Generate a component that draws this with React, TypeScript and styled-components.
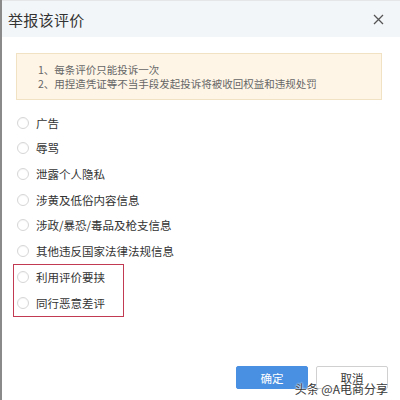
import React, { useState } from 'react';
import styled, { createGlobalStyle } from 'styled-components';

const GlobalStyle = createGlobalStyle`
  html, body {
    margin: 0;
    padding: 0;
    background: #fff;
  }
  body {
    font-family: "Noto Sans CJK SC", "Noto Sans", sans-serif;
  }
`;

const reasons = [
  '广告',
  '辱骂',
  '泄露个人隐私',
  '涉黄及低俗内容信息',
  '涉政/暴恐/毒品及枪支信息',
  '其他违反国家法律法规信息',
];

const flagged = ['利用评价要挟', '同行恶意差评'];

export default function App() {
  const [selected, setSelected] = useState<string | null>(null);

  const renderOption = (label: string) => (
    <Option key={label} onClick={() => setSelected(label)}>
      <Radio checked={selected === label} />
      <OptionLabel>{label}</OptionLabel>
    </Option>
  );

  return (
    <>
      <GlobalStyle />
      <Dialog>
        <Header>
          <Title>举报该评价</Title>
          <Close aria-label="close">
            <svg width="11" height="11" viewBox="0 0 11 11">
              <path d="M1 1 L10 10 M10 1 L1 10" stroke="#555" strokeWidth="1.3" />
            </svg>
          </Close>
        </Header>
        <Body>
          <Notice>
            <NoticeLine>1、每条评价只能投诉一次</NoticeLine>
            <NoticeLine>2、用捏造凭证等不当手段发起投诉将被收回权益和违规处罚</NoticeLine>
          </Notice>
          <OptionList>
            {reasons.map(renderOption)}
            <Highlight>{flagged.map(renderOption)}</Highlight>
          </OptionList>
        </Body>
        <Footer>
          <Button primary>确定</Button>
          <Button>取消</Button>
        </Footer>
        <Watermark>头条 @A电商分享</Watermark>
      </Dialog>
    </>
  );
}

const Dialog = styled.div`
  position: relative;
  box-sizing: border-box;
  width: 400px;
  height: 400px;
  display: flex;
  flex-direction: column;
  background: #fff;
  border-left: 2px solid #8a8a8a;
  overflow: hidden;
`;

const Header = styled.div`
  height: 37px;
  flex-shrink: 0;
  display: flex;
  align-items: center;
  justify-content: space-between;
  padding: 0 16px 0 6px;
  background: #f3f6f8;
  border-top: 1px solid #e4e6e8;
  box-sizing: border-box;
`;

const Title = styled.div`
  font-size: 15px;
  color: #333;
  letter-spacing: 0.3px;
`;

const Close = styled.div`
  display: flex;
  align-items: center;
  justify-content: center;
  width: 12px;
  height: 12px;
`;

const Body = styled.div`
  flex: 1;
  padding: 16px 18px 0 14px;
`;

const Notice = styled.div`
  box-sizing: border-box;
  height: 47px;
  padding: 9px 0 0 21px;
  background: #fef5e6;
  border: 1px solid #f1e2c4;
`;

const NoticeLine = styled.div`
  font-size: 10.5px;
  line-height: 14px;
  color: #666;
`;

const OptionList = styled.div`
  margin-top: 10px;
  display: flex;
  flex-direction: column;
`;

const Option = styled.label`
  height: 25.6px;
  display: flex;
  align-items: center;
  gap: 7px;
  padding-left: 1px;
  cursor: pointer;
`;

const Radio = styled.span<{ checked: boolean }>`
  box-sizing: border-box;
  width: 12px;
  height: 12px;
  border-radius: 50%;
  border: 1px solid #d6d6d6;
  background: ${(p) => (p.checked ? '#4a90e2' : '#fff')};
  box-shadow: inset 0 1px 1px rgba(0, 0, 0, 0.04);
`;

const OptionLabel = styled.span`
  font-size: 11.5px;
  color: #333;
`;

const Highlight = styled.div`
  box-sizing: border-box;
  width: 111px;
  margin-left: -3px;
  padding-left: 2px;
  border: 1.5px solid #c23a52;
`;

const Footer = styled.div`
  display: flex;
  justify-content: flex-end;
  gap: 8px;
  padding: 0 12px 11px 0;
`;

const Button = styled.button<{ primary?: boolean }>`
  width: 72px;
  height: 23px;
  border-radius: 2px;
  font-family: inherit;
  font-size: 11.5px;
  cursor: pointer;
  border: 1px solid ${(p) => (p.primary ? '#4a90e2' : '#d0d0d0')};
  background: ${(p) => (p.primary ? '#4a90e2' : '#fff')};
  color: ${(p) => (p.primary ? '#fff' : '#333')};
`;

const Watermark = styled.div`
  position: absolute;
  right: 12px;
  bottom: 3px;
  font-size: 12px;
  color: #3a3a3a;
  text-shadow: 0 0 2px #fff, 0 0 2px #fff;
  pointer-events: none;
`;
